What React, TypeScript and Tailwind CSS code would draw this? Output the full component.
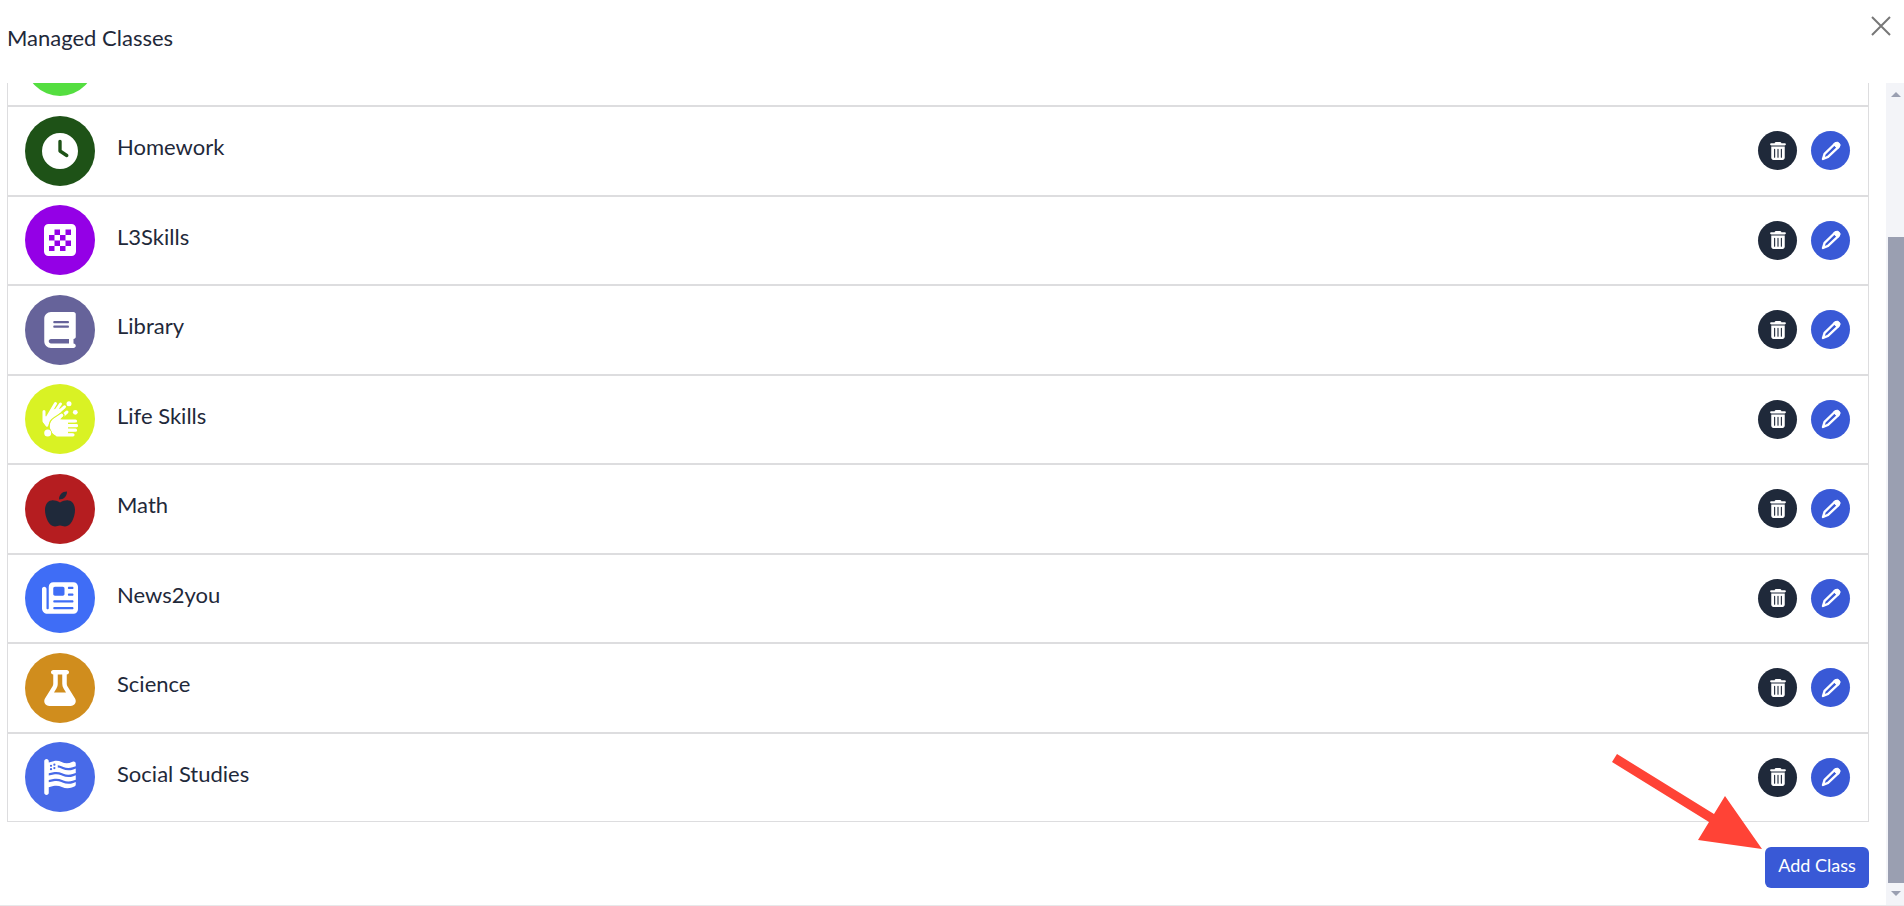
import React from 'react';
import { FaBook, FaClock, FaFlagUsa, FaFlask, FaNewspaper, FaTrashCan } from 'react-icons/fa6';

const BoardIcon: React.FC = () => (
  <svg viewBox="0 0 32 32" className="w-8 h-8" fill="currentColor">
    <path
      fillRule="evenodd"
      d="M4.500 0h23A4.500 4.500 0 0 1 32 4.500v23a4.500 4.500 0 0 1-4.500 4.500h-23A4.500 4.500 0 0 1 0 27.500v-23A4.500 4.500 0 0 1 4.500 0zM10.500 5.500V11H16V5.500zM21.500 5.500V11H27V5.500zM5 11v5.500h5.500V11zM16 11v5.500h5.500V11zM10.500 16.500V22H16V16.500zM21.500 16.500V22H27V16.500zM5 22v5h5.500V22zM16 22v5h5.500V22z"
    />
  </svg>
);

const HandsIcon: React.FC = () => (
  <svg viewBox="0 0 36 36" className="w-9 h-9" fill="currentColor" strokeLinecap="round" strokeLinejoin="round">
    {/* back hand */}
    <g stroke="currentColor" strokeWidth="3" fill="none">
      <path d="M2 10.500V20L5 24" />
      <path d="M5 17L13.500 2.500M8 18L18.500 3M12 15L22.500 5.800M21 14.500L25 11" />
    </g>
    <path d="M1 14L5 16 9 9 17 7 19 11 8 21 5 26 1 21z" />
    {/* front hand */}
    <path d="M7.500 26Q7 20 12 17L19 12.500Q22 12 22 15L19 18.500H33.500V22H26V23H34.500V26.500H26V27.500H33V31H26V32H31V35.500H16Q8.500 34.500 7.500 26z" stroke="#d9f224" strokeWidth="1.500" />
    <path
      d="M9.500 26.500Q9 21 13 18.500L19.500 14.300M15 20H33.500M15 24.600H34.500M14 29.200H33.500M15 33.800H31"
      fill="none"
      stroke="currentColor"
      strokeWidth="3.200"
    />
    <path d="M9 23L15 18 26 20V35H16Q10 34 8.500 28z" />
    <circle cx="5.700" cy="32" r="4.300" fill="#d9f224" />
    <circle cx="5.700" cy="32" r="3.500" />
    <circle cx="27" cy="2.800" r="2.500" />
    <circle cx="33.300" cy="11.300" r="2.400" />
  </svg>
);

const AppleIcon: React.FC = () => (
  <svg viewBox="0 0 36 36" className="w-9 h-9" fill="#1f293a">
    <path d="M17 8.500C17 4 20 0.500 25 0.500 25 5 22 8.500 17 8.500z" />
    <path d="M18 11.500C15 10 12 9 9.500 9.500 5 10 3 14.500 3 19 3 26 7 35.500 13 35.500 15 35.500 16 34.500 18 34.500S21 35.500 23 35.500C29 35.500 33 26 33 19 33 14.500 31 10 26.500 9.500 24 9 21 10 18 11.500z" />
  </svg>
);

const PenIcon: React.FC = () => (
  <svg viewBox="0 0 20 20" className="w-5 h-5" fill="none" stroke="currentColor" strokeLinejoin="round">
    <path d="M2 18l1.600-5.200L13.700 3a2.400 2.400 0 0 1 3.400 3.400L7 15.900z" strokeWidth="2.400" />
    <path d="M12.200 3.300L14.600 1.500Q16.500 0.600 18.200 2.200T18.500 5.600L16.700 7.800z" fill="currentColor" strokeWidth="1" />
  </svg>
);

const classes = [
  { name: 'Homework', color: 'bg-[#1e5217]', icon: <FaClock className="w-9 h-9" /> },
  { name: 'L3Skills', color: 'bg-[#9400e6]', icon: <BoardIcon /> },
  { name: 'Library', color: 'bg-[#66639a]', icon: <FaBook className="w-9 h-9" /> },
  { name: 'Life Skills', color: 'bg-[#d9f224]', icon: <HandsIcon /> },
  { name: 'Math', color: 'bg-[#b51d20]', icon: <AppleIcon /> },
  { name: 'News2you', color: 'bg-[#3f6df6]', icon: <FaNewspaper className="w-9 h-9" /> },
  { name: 'Science', color: 'bg-[#d08d1d]', icon: <FaFlask className="w-9 h-9" /> },
  { name: 'Social Studies', color: 'bg-[#486ae8]', icon: <FaFlagUsa className="w-9 h-9" /> },
];

const App: React.FC = () => {
  return (
    <div className="h-screen flex flex-col bg-white overflow-hidden font-['Lato',sans-serif] text-[#1f293a]">
      {/* Header */}
      <header className="h-[83px] shrink-0 flex items-start justify-between pl-[7px] pr-[13px]">
        <h1 className="text-[22px] leading-8 pt-[22px]">Managed Classes</h1>
        <button aria-label="Close" className="mt-4 text-[#777]">
          <svg viewBox="0 0 20 20" className="w-5 h-5" stroke="currentColor" strokeWidth="2">
            <path d="M1 1l18 18M19 1L1 19" />
          </svg>
        </button>
      </header>

      <div className="flex-1 min-h-0 flex">
        {/* Class list */}
        <main className="flex-1 min-w-0 flex flex-col pl-[7px] pr-[17px]">
          <div className="h-[23px] shrink-0 flex items-end overflow-hidden border-x border-b border-[#dddddf] pl-[17px] pb-[9px]">
            <div className="w-[70px] h-[70px] shrink-0 rounded-full bg-[#54de40]" />
          </div>
          <ul className="flex-1 grid auto-rows-fr">
            {classes.map((item) => (
              <li key={item.name} className="flex items-center border border-[#dddddf] pl-[17px] pr-[18px]">
                <div className={`w-[70px] h-[70px] shrink-0 rounded-full flex items-center justify-center text-white ${item.color}`}>
                  {item.icon}
                </div>
                <span className="flex-1 pl-[22px] pb-[7px] text-[22px] leading-8">{item.name}</span>
                <div className="flex gap-3.5">
                  <button
                    aria-label={`Delete ${item.name}`}
                    className="w-[39px] h-[39px] rounded-full bg-[#1f293a] text-white flex items-center justify-center"
                  >
                    <FaTrashCan className="w-[18px] h-[18px]" />
                  </button>
                  <button
                    aria-label={`Edit ${item.name}`}
                    className="w-[39px] h-[39px] rounded-full bg-[#3959d6] text-white flex items-center justify-center"
                  >
                    <PenIcon />
                  </button>
                </div>
              </li>
            ))}
          </ul>
          <div className="relative shrink-0 flex justify-end pt-[25px] pb-[17px]">
            <button className="h-[41px] w-[104px] rounded-md bg-[#3959d6] text-white text-lg leading-6 pb-1.5">
              Add Class
            </button>
            {/* Pointer to the button */}
            <svg viewBox="0 0 150 96" className="absolute right-[107px] bottom-[56px] w-[150px] h-24" fill="#ff4336">
              <path d="M5 1L102 61L113 43L150 96L86 87L97 69L0 9z" />
            </svg>
          </div>
        </main>

        {/* Scrollbar */}
        <div className="w-[18px] shrink-0 flex flex-col bg-[#f3f4f8] text-[#9a9fb1]">
          <svg viewBox="0 0 18 22" className="w-[18px] h-[22px]" fill="currentColor">
            <path d="M5 14h10l-5-5z" />
          </svg>
          <div className="flex-1 flex flex-col justify-end pl-0.5">
            <div className="h-[83%] bg-[#9a9fb1]" />
          </div>
          <svg viewBox="0 0 18 22" className="w-[18px] h-[22px]" fill="currentColor">
            <path d="M5 8h10l-5 5z" />
          </svg>
        </div>
      </div>
      <div className="h-px shrink-0 bg-[#e8e8ea]" />
    </div>
  );
};

export default App;
